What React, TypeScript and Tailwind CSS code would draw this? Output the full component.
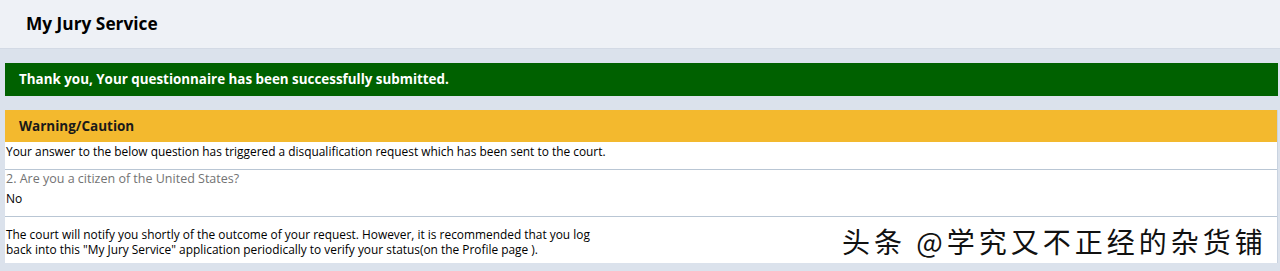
export default function App() {
    return (
        <div
            className="relative h-[271px] w-[1280px] bg-[#dbe2ec] text-black"
            style={{ fontFamily: '"Open Sans", "Noto Sans", sans-serif' }}
        >
            <header className="flex h-[49px] items-center border-b border-[#d3dae5] bg-[#eef1f6] pl-[26px]">
                <h1 className="text-[17.3px] font-bold">My Jury Service</h1>
            </header>
            <div className="flex flex-col pl-[5px] pr-[2px] pt-[14px]">
                <div className="flex h-[33px] items-center bg-[#006100] pl-[14px] text-[13.4px] font-bold text-white">
                    Thank you, Your questionnaire has been successfully submitted.
                </div>
                <section className="mt-[14px] border-r border-[#c9d3e0] bg-white">
                    <div className="flex h-[32px] items-center bg-[#f3b92e] pl-[14px] text-[13.5px] font-bold text-[#1a1a1a]">
                        Warning/Caution
                    </div>
                    <p className="pl-[1px] pt-[1px] text-[11.9px] leading-[17px]">
                        Your answer to the below question has triggered a disqualification request which has been sent to the court.
                    </p>
                    <div className="mt-[9px] border-y border-[#b9c6d4] pb-[9px] pt-[1px]">
                        <div className="pl-[1px] text-[12.5px] leading-[16px] text-[#737373]">
                            2. Are you a citizen of the United States?
                        </div>
                        <div className="pl-[1px] pt-[3px] text-[12px] leading-[17px]">No</div>
                    </div>
                    <p className="w-[600px] pb-[6px] pl-[1px] pt-[10px] text-[11.9px] leading-[15px]">
                        The court will notify you shortly of the outcome of your request. However, it is recommended that you log back into this "My Jury Service" application periodically to verify your status(on the Profile page ).
                    </p>
                </section>
            </div>
            <div
                className="absolute left-[842px] top-[224px] whitespace-nowrap text-[28px] leading-[34px] tracking-[4px] text-[#111] [text-shadow:1px_1px_0_#fff,-1px_-1px_0_#fff]"
                style={{ fontFamily: '"Noto Sans CJK SC", sans-serif' }}
            >
                头条 @学究又不正经的杂货铺
            </div>
        </div>
    );
}
